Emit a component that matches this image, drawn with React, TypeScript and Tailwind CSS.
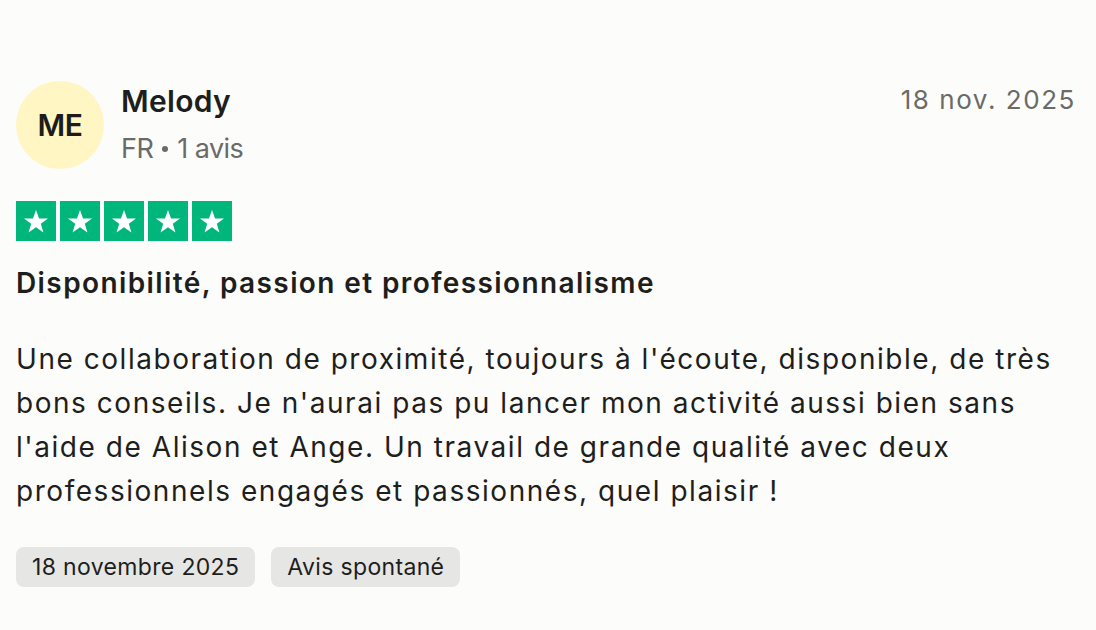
const font = { fontFamily: "Inter, 'Noto Sans', sans-serif" };

function Star() {
  return (
    <div className="flex h-10 w-10 items-center justify-center bg-[#00b67a]">
      <svg viewBox="0 0 24 24" className="h-7 w-7" fill="#ffffff">
        <path d="M12 2.5l2.6 7.3h7.7l-6.2 4.6 2.3 7.4L12 17.3l-6.4 4.5 2.3-7.4-6.2-4.6h7.7z" />
      </svg>
    </div>
  );
}

const lines = [
  "Une collaboration de proximité, toujours à l'écoute, disponible, de très",
  "bons conseils. Je n'aurai pas pu lancer mon activité aussi bien sans",
  "l'aide de Alison et Ange. Un travail de grande qualité avec deux",
  "professionnels engagés et passionnés, quel plaisir !",
];

export default function App() {
  return (
    <div className="min-h-screen bg-[#fcfcfb] text-[#1e1e1c]" style={font}>
      <div className="pl-4 pr-[20px] pt-[81px]">
        <div className="flex items-start justify-between">
          <div className="flex items-start gap-[17px]">
            <div className="flex h-[88px] w-[88px] items-center justify-center rounded-full bg-[#fff6c4] text-[30px] font-semibold tracking-[-0.01em] text-[#1c1c1c]">
              ME
            </div>
            <div className="flex flex-col pt-[2px]">
              <span className="text-[30px] font-semibold leading-[36px] tracking-[0.01em]">Melody</span>
              <span className="mt-[14px] flex items-center text-[27px] leading-[32px] tracking-[-0.02em] text-[#6b6a66]">
                FR
                <span className="mx-[9px] inline-block h-[6px] w-[6px] rounded-full bg-[#6b6a66]" />
                1 avis
              </span>
            </div>
          </div>
          <span className="pt-[1px] text-[26px] leading-[36px] tracking-[0.06em] text-[#6b6a66]">18 nov. 2025</span>
        </div>

        <div className="mt-[32px] flex gap-1">
          <Star />
          <Star />
          <Star />
          <Star />
          <Star />
        </div>

        <h2 className="mt-[24px] text-[28px] font-semibold leading-[36px] tracking-[0.05em]">
          Disponibilité, passion et professionnalisme
        </h2>

        <p className="mt-[36px] text-[28px] leading-[44px] tracking-[0.055em]">
          {lines.map((l) => (
            <span key={l} className="block whitespace-nowrap">
              {l}
            </span>
          ))}
        </p>

        <div className="mt-[34px] flex gap-4">
          <span className="rounded-lg bg-[#e6e6e4] px-4 text-[23px] leading-[40px] tracking-[0.015em]">18 novembre 2025</span>
          <span className="rounded-lg bg-[#e6e6e4] px-4 text-[23px] leading-[40px] tracking-[0.015em]">Avis spontané</span>
        </div>
      </div>
    </div>
  );
}
